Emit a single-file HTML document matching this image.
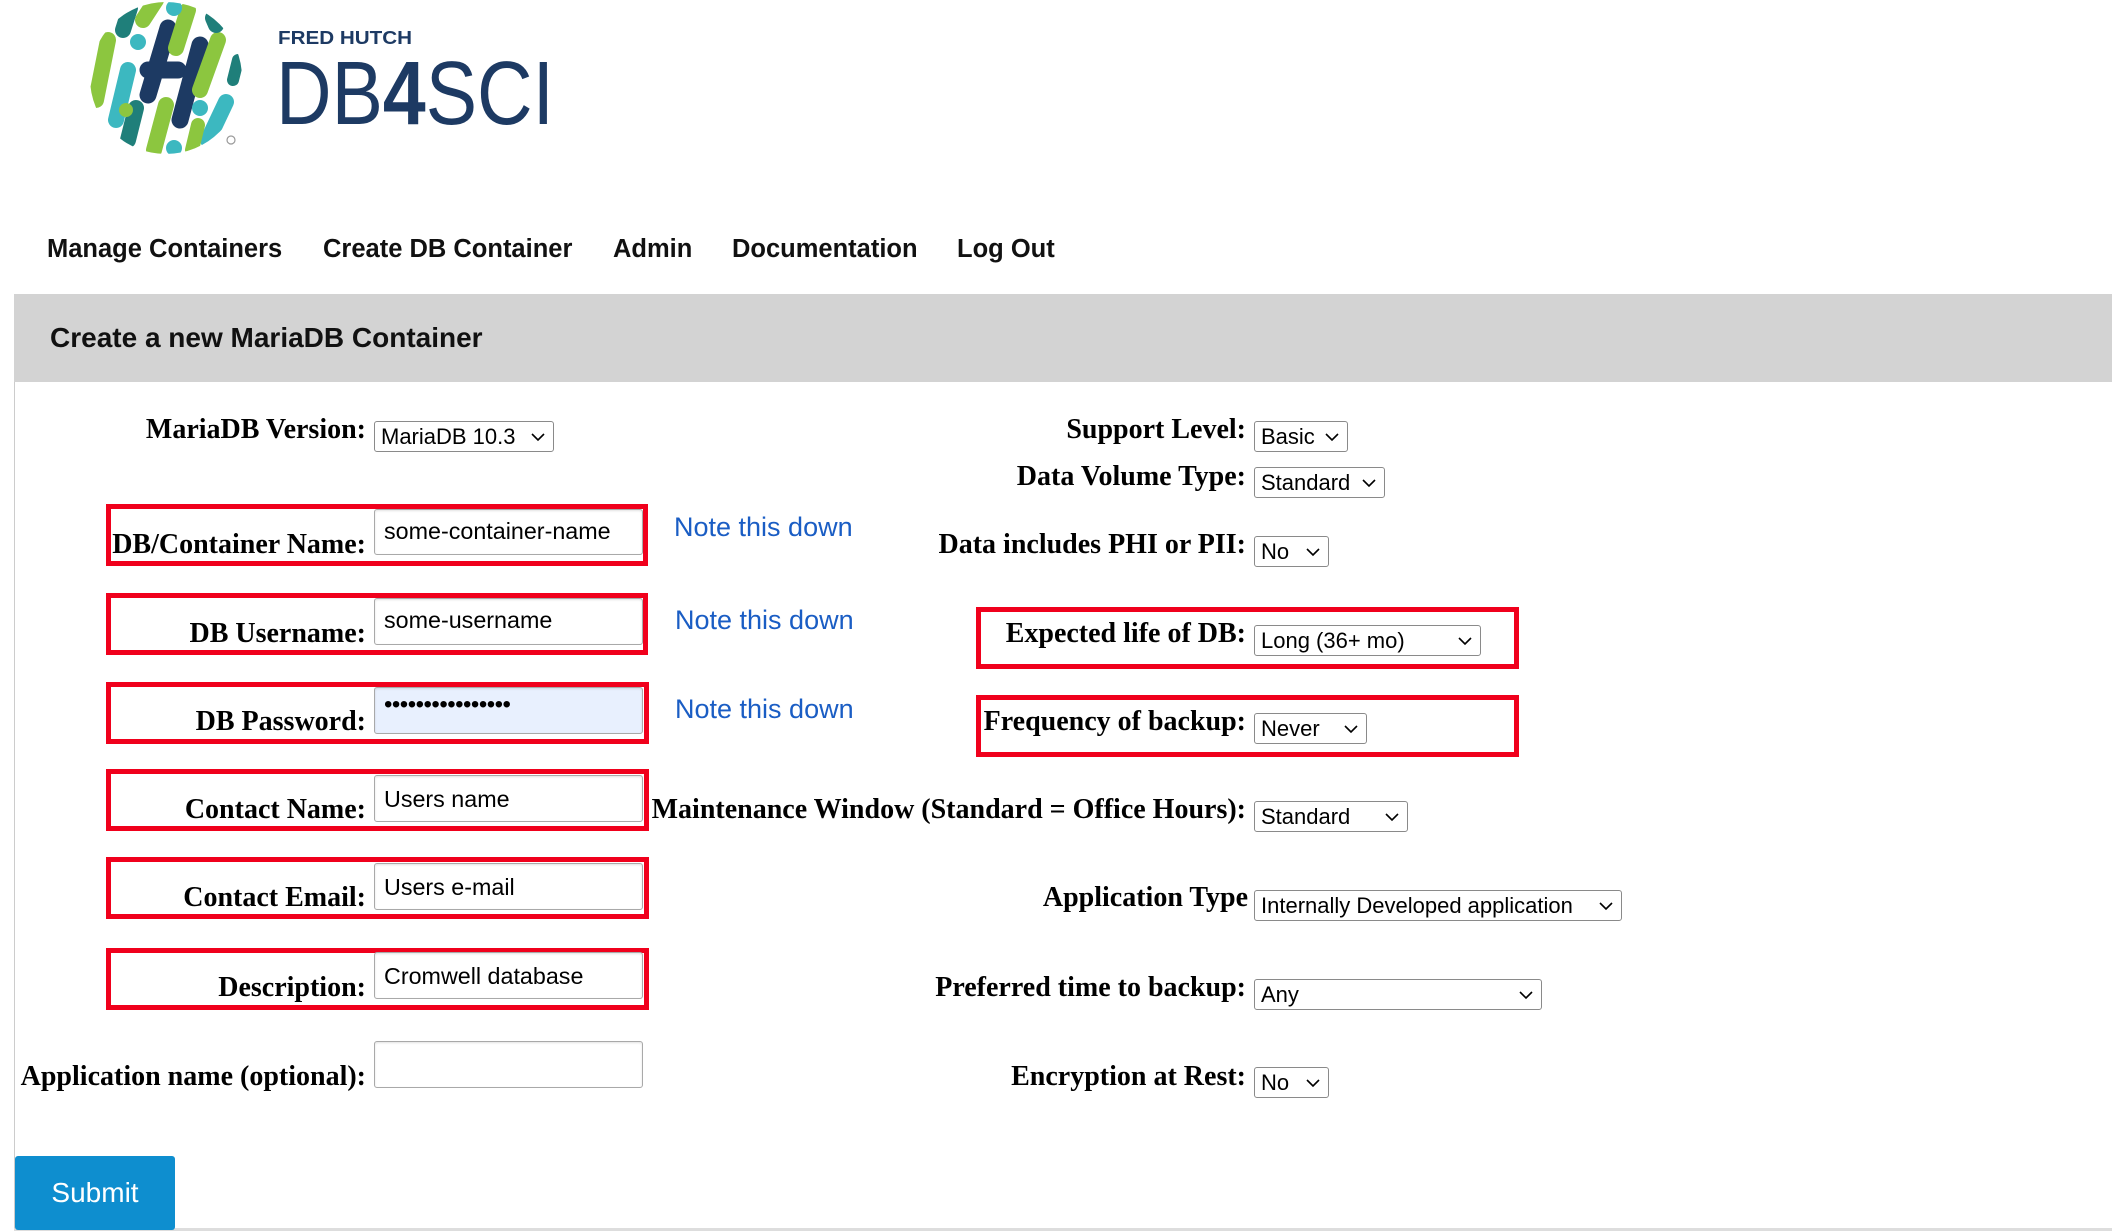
<!DOCTYPE html>
<html><head><meta charset="utf-8">
<style>
*{margin:0;padding:0;box-sizing:border-box}
body{width:2112px;height:1231px;background:#fff;position:relative;overflow:hidden;font-family:"Liberation Sans",sans-serif}
.a{position:absolute}
.nav{position:absolute;top:235px;font:bold 25.5px "Liberation Sans",sans-serif;color:#111}
.bar{position:absolute;left:14px;top:294px;width:2098px;height:88px;background:#d3d3d3}
.lbl{position:absolute;font:bold 28px "Liberation Serif",serif;color:#000;line-height:28px;white-space:nowrap;text-align:right}
.inp{position:absolute;border:1px solid #a9a9a9;border-radius:3px;background:#fff;font:23.3px "Liberation Sans",sans-serif;color:#000;padding-left:9px;line-height:44px;box-shadow:inset 0 1px 2px rgba(0,0,0,.12)}
.sel{position:absolute;border:1px solid #8a8a8a;border-radius:3px;background:#fff;font:22px "Liberation Sans",sans-serif;color:#000;padding-left:6px;white-space:nowrap}
.sel svg{position:absolute;right:8px;top:50%;margin-top:-4px}
.red{position:absolute;border:5px solid #f0001c}
.note{position:absolute;font:27px "Liberation Sans",sans-serif;color:#1a5dc4}
</style></head><body>
<svg class="a" style="left:88px;top:0" width="160" height="156" viewBox="0 0 160 156">
<defs><clipPath id="c"><circle cx="78" cy="78" r="76"/></clipPath></defs>
<g clip-path="url(#c)" stroke-linecap="round" fill="none">
<line x1="20" y1="40" x2="8" y2="100" stroke="#8cc63f" stroke-width="16"/>
<line x1="35" y1="30" x2="42" y2="8" stroke="#1f7f7a" stroke-width="16"/>
<line x1="40" y1="70" x2="28" y2="120" stroke="#3cb8c0" stroke-width="16"/>
<line x1="55" y1="20" x2="68" y2="0" stroke="#8cc63f" stroke-width="16"/>
<circle cx="50" cy="42" r="8" fill="#3cb8c0"/>
<line x1="48" y1="108" x2="40" y2="140" stroke="#1f7f7a" stroke-width="16"/>
<line x1="80" y1="28" x2="60" y2="95" stroke="#1d3a63" stroke-width="17"/>
<line x1="60" y1="70" x2="90" y2="70" stroke="#1d3a63" stroke-width="17"/>
<line x1="112" y1="45" x2="92" y2="120" stroke="#1d3a63" stroke-width="17"/>
<line x1="78" y1="105" x2="66" y2="150" stroke="#8cc63f" stroke-width="16"/>
<line x1="100" y1="10" x2="88" y2="48" stroke="#8cc63f" stroke-width="16"/>
<circle cx="86" cy="8" r="8" fill="#3cb8c0"/>
<line x1="130" y1="40" x2="112" y2="90" stroke="#8cc63f" stroke-width="16"/>
<line x1="125" y1="18" x2="128" y2="25" stroke="#1f7f7a" stroke-width="16"/>
<line x1="150" y1="60" x2="145" y2="80" stroke="#1f7f7a" stroke-width="12"/>
<circle cx="112" cy="108" r="8" fill="#3cb8c0"/>
<line x1="138" y1="102" x2="120" y2="140" stroke="#3cb8c0" stroke-width="16"/>
<line x1="110" y1="125" x2="104" y2="150" stroke="#8cc63f" stroke-width="14"/>
<circle cx="86" cy="148" r="8" fill="#3cb8c0"/>
<circle cx="38" cy="110" r="7" fill="#8cc63f"/>
</g>
<circle cx="143" cy="140" r="4" fill="none" stroke="#999" stroke-width="1.2"/>
</svg>
<svg class="a" style="left:276px;top:20px" width="300" height="110">
<text x="2" y="24" font-family="Liberation Sans" font-weight="bold" font-size="18" fill="#1d3a63" textLength="134" lengthAdjust="spacingAndGlyphs">FRED HUTCH</text>
<text x="0" y="104" font-family="Liberation Sans" font-size="90" fill="#1d3a63" textLength="278" lengthAdjust="spacingAndGlyphs">DB<tspan font-weight="bold">4</tspan>SCI</text>
</svg>
<div class="nav" style="left:47px">Manage Containers</div>
<div class="nav" style="left:323px">Create DB Container</div>
<div class="nav" style="left:613px">Admin</div>
<div class="nav" style="left:732px">Documentation</div>
<div class="nav" style="left:957px">Log Out</div>
<div class="bar"></div>
<div class="a" style="left:50px;top:322px;font:bold 28px 'Liberation Sans',sans-serif;color:#111">Create a new MariaDB Container</div>
<div class="a" style="left:14px;top:382px;width:1px;height:848px;background:#ccc"></div>
<div class="a" style="left:14px;top:1228px;width:2098px;height:3px;background:#ddd"></div>

<div class="red" style="left:106px;top:504px;width:542px;height:62px"></div>
<div class="red" style="left:106px;top:593px;width:542px;height:62px"></div>
<div class="red" style="left:106px;top:682px;width:543px;height:62px"></div>
<div class="red" style="left:106px;top:769px;width:543px;height:62px"></div>
<div class="red" style="left:106px;top:857px;width:543px;height:62px"></div>
<div class="red" style="left:106px;top:948px;width:543px;height:62px"></div>
<div class="red" style="left:976px;top:607px;width:543px;height:62px"></div>
<div class="red" style="left:976px;top:695px;width:543px;height:62px"></div>

<div class="lbl" style="right:1746px;top:416px">MariaDB Version:</div>
<div class="lbl" style="right:1746px;top:531px">DB/Container Name:</div>
<div class="lbl" style="right:1746px;top:620px">DB Username:</div>
<div class="lbl" style="right:1746px;top:708px">DB Password:</div>
<div class="lbl" style="right:1746px;top:796px">Contact Name:</div>
<div class="lbl" style="right:1746px;top:884px">Contact Email:</div>
<div class="lbl" style="right:1746px;top:974px">Description:</div>
<div class="lbl" style="right:1746px;top:1063px">Application name (optional):</div>

<div class="sel" style="left:374px;top:421px;width:180px;height:31px;line-height:29px">MariaDB 10.3<svg width="14" height="9"><path d="M1 1l6 6 6-6" stroke="#000" stroke-width="1.6" fill="none"/></svg></div>
<div class="inp" style="left:374px;top:509px;width:269px;height:46px;line-height:42px">some-container-name</div>
<div class="inp" style="left:374px;top:598px;width:269px;height:47px;line-height:42px">some-username</div>
<div class="inp" style="left:374px;top:687px;width:269px;height:47px;background:#e8f0fe;line-height:34px;letter-spacing:-0.5px;font-size:24px">••••••••••••••••</div>
<div class="inp" style="left:374px;top:775px;width:269px;height:47px;line-height:46px">Users name</div>
<div class="inp" style="left:374px;top:863px;width:269px;height:47px;line-height:46px">Users e-mail</div>
<div class="inp" style="left:374px;top:952px;width:269px;height:47px;line-height:46px">Cromwell database</div>
<div class="inp" style="left:374px;top:1041px;width:269px;height:47px"></div>

<div class="note" style="left:674px;top:512px">Note this down</div>
<div class="note" style="left:675px;top:605px">Note this down</div>
<div class="note" style="left:675px;top:694px">Note this down</div>

<div class="lbl" style="right:866px;top:416px">Support Level:</div>
<div class="lbl" style="right:866px;top:463px">Data Volume Type:</div>
<div class="lbl" style="right:866px;top:531px">Data includes PHI or PII:</div>
<div class="lbl" style="right:866px;top:620px">Expected life of DB:</div>
<div class="lbl" style="right:866px;top:708px">Frequency of backup:</div>
<div class="lbl" style="right:866px;top:796px">Maintenance Window (Standard = Office Hours):</div>
<div class="lbl" style="right:864px;top:884px">Application Type</div>
<div class="lbl" style="right:866px;top:974px">Preferred time to backup:</div>
<div class="lbl" style="right:866px;top:1063px">Encryption at Rest:</div>

<div class="sel" style="left:1254px;top:421px;width:94px;height:31px;line-height:29px">Basic<svg width="14" height="9"><path d="M1 1l6 6 6-6" stroke="#000" stroke-width="1.6" fill="none"/></svg></div>
<div class="sel" style="left:1254px;top:467px;width:131px;height:31px;line-height:29px">Standard<svg width="14" height="9"><path d="M1 1l6 6 6-6" stroke="#000" stroke-width="1.6" fill="none"/></svg></div>
<div class="sel" style="left:1254px;top:536px;width:75px;height:31px;line-height:29px">No<svg width="14" height="9"><path d="M1 1l6 6 6-6" stroke="#000" stroke-width="1.6" fill="none"/></svg></div>
<div class="sel" style="left:1254px;top:625px;width:227px;height:31px;line-height:29px">Long (36+ mo)<svg width="14" height="9"><path d="M1 1l6 6 6-6" stroke="#000" stroke-width="1.6" fill="none"/></svg></div>
<div class="sel" style="left:1254px;top:713px;width:113px;height:31px;line-height:29px">Never<svg width="14" height="9"><path d="M1 1l6 6 6-6" stroke="#000" stroke-width="1.6" fill="none"/></svg></div>
<div class="sel" style="left:1254px;top:801px;width:154px;height:31px;line-height:29px">Standard<svg width="14" height="9"><path d="M1 1l6 6 6-6" stroke="#000" stroke-width="1.6" fill="none"/></svg></div>
<div class="sel" style="left:1254px;top:890px;width:368px;height:31px;line-height:29px">Internally Developed application<svg width="14" height="9"><path d="M1 1l6 6 6-6" stroke="#000" stroke-width="1.6" fill="none"/></svg></div>
<div class="sel" style="left:1254px;top:979px;width:288px;height:31px;line-height:29px">Any<svg width="14" height="9"><path d="M1 1l6 6 6-6" stroke="#000" stroke-width="1.6" fill="none"/></svg></div>
<div class="sel" style="left:1254px;top:1067px;width:75px;height:31px;line-height:29px">No<svg width="14" height="9"><path d="M1 1l6 6 6-6" stroke="#000" stroke-width="1.6" fill="none"/></svg></div>

<div class="a" style="left:15px;top:1156px;width:160px;height:74px;background:#0e8ecf;border-radius:3px;color:#fff;font:28px 'Liberation Sans',sans-serif;text-align:center;line-height:74px">Submit</div>
</body></html>
